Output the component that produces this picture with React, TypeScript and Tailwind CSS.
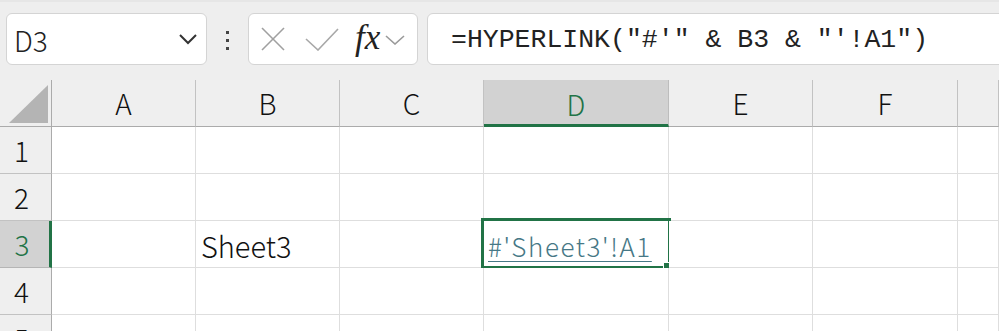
import React from "react";

const colLetters = ["A", "B", "C", "D", "E", "F", ""];

function Corner() {
  return (
    <div className="relative bg-[#efefef] border-r border-b border-r-[#ababab] border-b-[#ababab]">
      <svg className="absolute left-[9px] top-[5px]" width="40" height="39" viewBox="0 0 40 39">
        <polygon points="39,0 39,38 0,38" fill="#b4b4b4" />
      </svg>
    </div>
  );
}

function ColHeader({ label, selected }: { label: string; selected?: boolean }) {
  return (
    <div
      className={
        selected
          ? "flex items-center justify-center bg-[#d2d2d2] border-r border-r-[#bdbdbd] border-b-[3px] border-b-[#217346] text-[#217346] pt-[3px]"
          : "flex items-center justify-center bg-[#efefef] border-r border-r-[#c2c2c2] border-b border-b-[#ababab] text-[#111]"
      }
    >
      <span className="text-[28px] font-light leading-none">{label}</span>
    </div>
  );
}

function RowHeader({ n, selected }: { n: number; selected?: boolean }) {
  return (
    <div
      className={
        selected
          ? "flex items-center justify-center pr-[5px] bg-[#d2d2d2] border-r-[3px] border-r-[#217346] border-b border-b-[#b5b5b5] text-[#217346]"
          : "flex items-center justify-center pr-[8px] bg-[#efefef] border-r border-r-[#ababab] border-b border-b-[#c2c2c2] text-[#111]"
      }
    >
      <span className="text-[28px] font-light leading-none">{n}</span>
    </div>
  );
}

function Cell({ children }: { children?: React.ReactNode }) {
  return (
    <div className="relative flex items-center bg-white border-r border-b border-[#dedede] pl-[5px]">
      {children}
    </div>
  );
}

export default function App() {
  const rows = [1, 2, 3, 4, 5];
  return (
    <div
      className="w-[999px] h-[331px] overflow-hidden bg-white"
      style={{ fontFamily: '"Noto Sans CJK JP", "Liberation Sans", sans-serif' }}
    >
      {/* formula bar */}
      <div className="h-[80px] bg-[#eeeeee] flex items-start pt-[13px] pl-[6px] border-t-[2px] border-t-[#e6e6e6]">
        <div className="-mt-[2px] w-[201px] h-[52px] bg-white border border-[#d4d4d4] rounded-[6px] flex items-center pl-[7px] pr-[8px]">
          <span className="text-[28px] font-light leading-none text-[#222] mt-[2px]">D3</span>
          <svg className="ml-auto" width="20" height="12" viewBox="0 0 20 12">
            <polyline points="2,2 10,10 18,2" fill="none" stroke="#333" strokeWidth="2" />
          </svg>
        </div>
        <div className="-mt-[2px] w-[41px] h-[52px] flex flex-col items-center justify-center gap-[5px] pt-[2px]">
          <div className="w-[3px] h-[3px] bg-[#444]" />
          <div className="w-[3px] h-[3px] bg-[#444]" />
          <div className="w-[3px] h-[3px] bg-[#444]" />
        </div>
        <div className="-mt-[2px] w-[170px] h-[52px] bg-white border border-[#d4d4d4] rounded-[6px] flex items-center">
          <svg className="ml-[12px]" width="24" height="24" viewBox="0 0 24 24">
            <line x1="1" y1="1" x2="23" y2="23" stroke="#a0a0a0" strokeWidth="1.6" />
            <line x1="23" y1="1" x2="1" y2="23" stroke="#a0a0a0" strokeWidth="1.6" />
          </svg>
          <svg className="ml-[20px]" width="34" height="24" viewBox="0 0 34 24">
            <polyline points="1,12 13,23 33,2" fill="none" stroke="#a8a8a8" strokeWidth="1.6" />
          </svg>
          <span
            className="ml-[16px] text-[35px] italic leading-none text-[#222] -mt-[4px]"
            style={{ fontFamily: '"Liberation Serif", serif' }}
          >
            fx
          </span>
          <svg className="ml-[5px] mt-[2px]" width="20" height="10" viewBox="0 0 20 10">
            <polyline points="1,1 10,9 19,1" fill="none" stroke="#9a9a9a" strokeWidth="1.6" />
          </svg>
        </div>
        <div className="-mt-[2px] ml-[9px] flex-1 -mr-[20px] h-[52px] bg-white border border-[#d4d4d4] rounded-[6px] flex items-center pl-[23px] pt-[3px]">
          <span
            className="text-[26.5px] leading-none text-[#222] whitespace-pre"
            style={{ fontFamily: '"Liberation Mono", monospace' }}
          >
            =HYPERLINK("#'" &amp; B3 &amp; "'!A1")
          </span>
        </div>
      </div>

      {/* grid */}
      <div className="grid grid-cols-[52px_144px_144px_144px_185px_144px_145px_1fr] auto-rows-[47px]">
        <Corner />
        {colLetters.map((l, i) => (
          <ColHeader key={i} label={l} selected={l === "D"} />
        ))}
        {rows.map((r) => (
          <React.Fragment key={r}>
            <RowHeader n={r} selected={r === 3} />
            {colLetters.map((l, i) => {
              if (r === 3 && l === "B") {
                return (
                  <Cell key={i}>
                    <span className="text-[29px] font-light leading-none text-[#111] mt-[2px]">Sheet3</span>
                  </Cell>
                );
              }
              if (r === 3 && l === "D") {
                return (
                  <Cell key={i}>
                    <span className="text-[26px] font-light tracking-[1.6px] leading-none text-[#467886] underline decoration-1 underline-offset-[4px] mt-[4px] -ml-[1px]">
                      #'Sheet3'!A1
                    </span>
                    <div className="absolute -left-[3px] -top-[3px] w-[190px] h-[51px] border-[3px] border-[#217346] pointer-events-none">
                      <div className="absolute left-[179px] top-[41px] w-[10px] h-[10px] bg-white p-[1px]">
                        <div className="w-[8px] h-[8px] bg-[#217346]" />
                      </div>
                    </div>
                  </Cell>
                );
              }
              return <Cell key={i} />;
            })}
          </React.Fragment>
        ))}
      </div>
    </div>
  );
}
